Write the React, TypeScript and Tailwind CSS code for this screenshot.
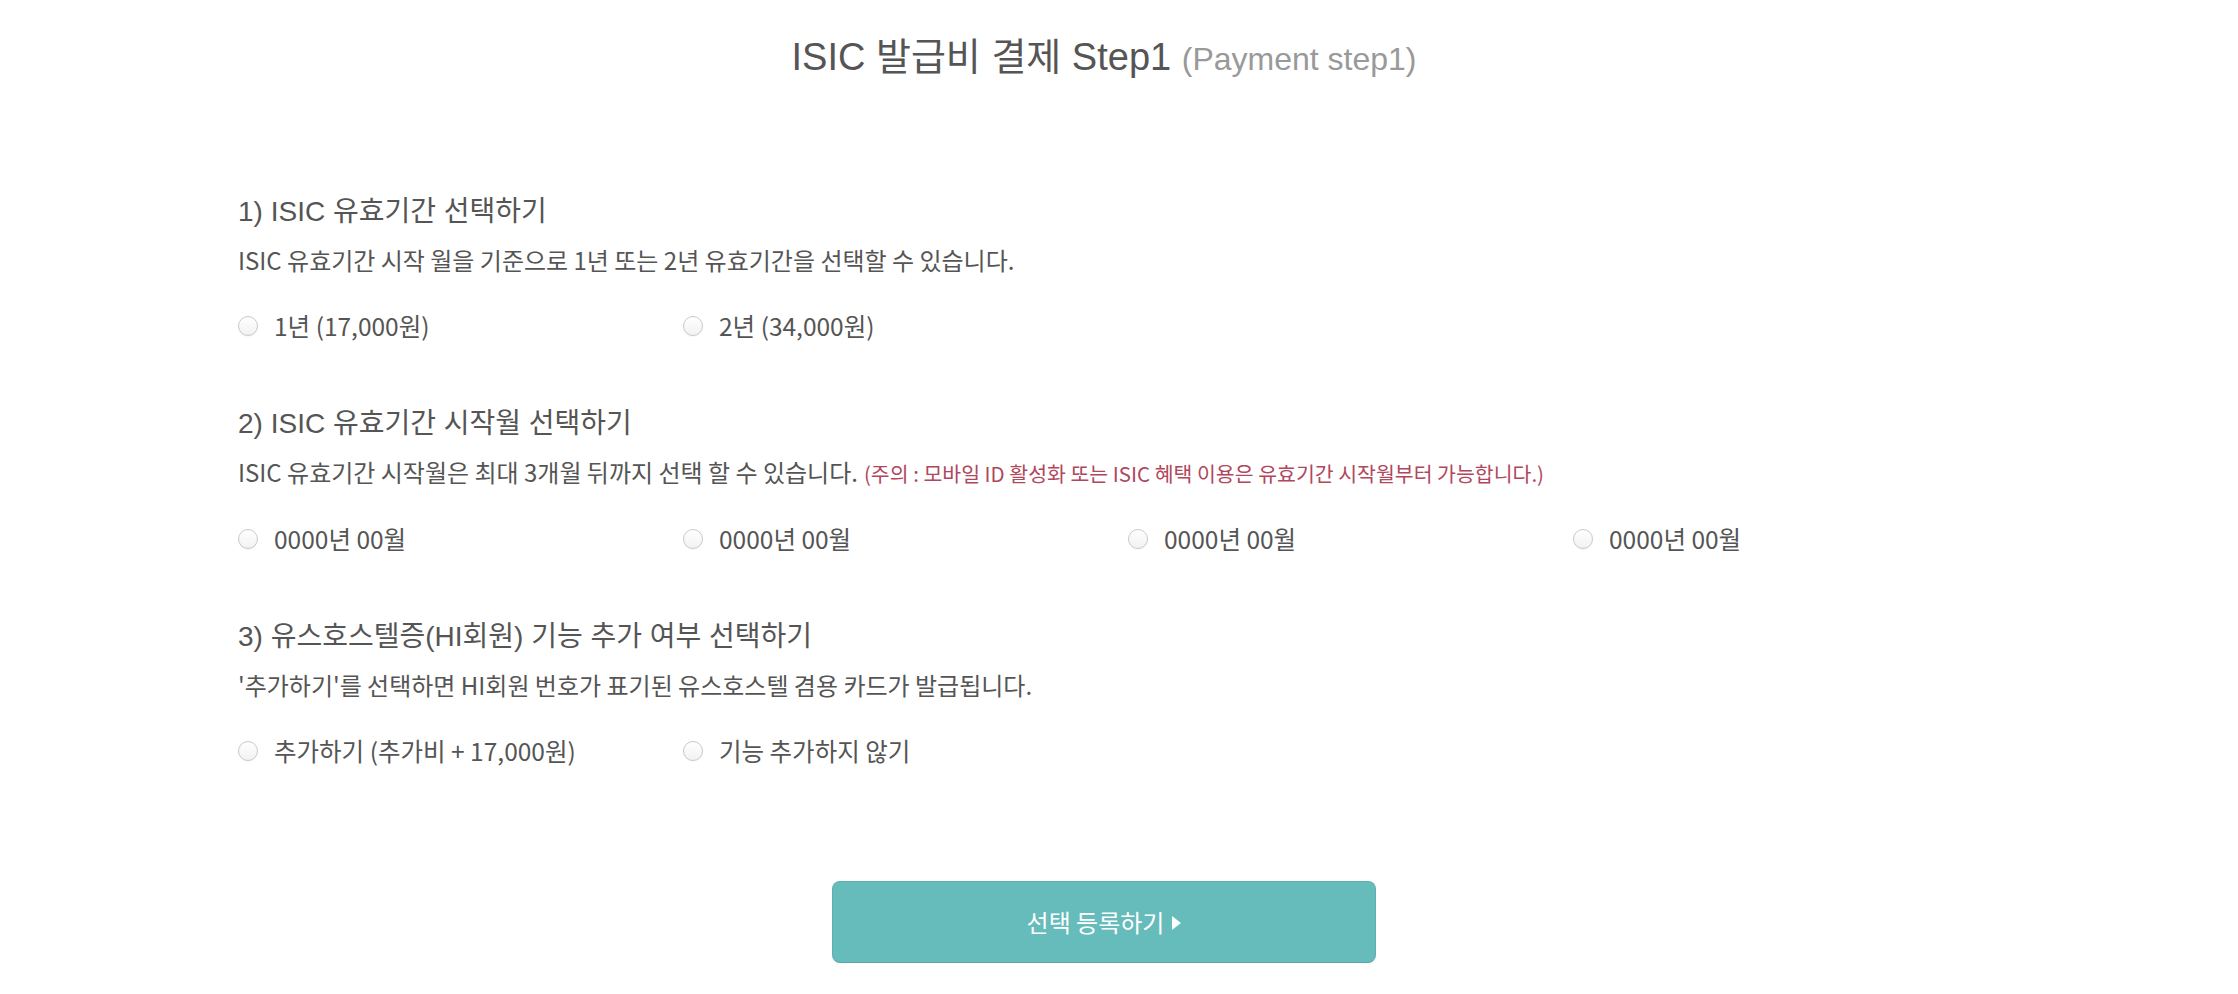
const sans = "font-['Liberation_Sans','Noto_Sans_CJK_KR',sans-serif]";
const kr = "font-['Noto_Sans_CJK_KR','Liberation_Sans',sans-serif]";

function Radio({ label }: { label: string }) {
  return (
    <label className="w-[445px] shrink-0 flex items-center gap-[16px] cursor-pointer">
      <span className="w-[20px] h-[20px] rounded-full border border-[#c9c9c9] bg-gradient-to-b from-white to-[#f2f2f2] shadow-[0_1px_1px_rgba(0,0,0,0.04)]" />
      <span className={`${kr} text-[24.5px] text-[#555]`}>{label}</span>
    </label>
  );
}

function Section({
  title,
  desc,
  note,
  options,
  first,
}: {
  title: string;
  desc: string;
  note?: string;
  options: string[];
  first?: boolean;
}) {
  return (
    <section className={first ? 'mt-[110px]' : 'mt-[62px]'}>
      <h2 className={`${sans} text-[28px] leading-[36px] text-[#555]`}>{title}</h2>
      <p className={`${kr} mt-[12px] text-[24px] leading-[36px] text-[#555]`}>
        {desc}
        {note && <span className="ml-[6px] text-[20.5px] text-[#b0475d]">{note}</span>}
      </p>
      <div className="mt-[30px] h-[36px] flex items-center">
        {options.map((o, i) => (
          <Radio key={i} label={o} />
        ))}
      </div>
    </section>
  );
}

export default function App() {
  return (
    <div className="min-h-screen bg-white pr-[30px]">
      <div className="mx-auto w-[1732px]">
        {/* 타이틀 */}
        <h1 className={`${sans} pt-[32px] text-center text-[38px] leading-[50px] text-[#555]`}>
          ISIC 발급비 결제 Step1{' '}
          <span className="text-[32px] text-[#999]">(Payment step1)</span>
        </h1>

        <Section
          first
          title="1) ISIC 유효기간 선택하기"
          desc="ISIC 유효기간 시작 월을 기준으로 1년 또는 2년 유효기간을 선택할 수 있습니다."
          options={['1년 (17,000원)', '2년 (34,000원)']}
        />
        <Section
          title="2) ISIC 유효기간 시작월 선택하기"
          desc="ISIC 유효기간 시작월은 최대 3개월 뒤까지 선택 할 수 있습니다."
          note="(주의 : 모바일 ID 활성화 또는 ISIC 혜택 이용은 유효기간 시작월부터 가능합니다.)"
          options={['0000년 00월', '0000년 00월', '0000년 00월', '0000년 00월']}
        />
        <Section
          title="3) 유스호스텔증(HI회원) 기능 추가 여부 선택하기"
          desc="'추가하기'를 선택하면 HI회원 번호가 표기된 유스호스텔 겸용 카드가 발급됩니다."
          options={['추가하기 (추가비 + 17,000원)', '기능 추가하지 않기']}
        />

        {/* 등록 버튼 */}
        <div className="mt-[112px] flex justify-center">
          <button
            className={`${kr} w-[544px] h-[82px] rounded-[8px] bg-[#66bbbb] border border-[#5cb0b0] border-b-[#55a8a7] text-white text-[24px] flex items-center justify-center gap-[8px]`}
          >
            선택 등록하기
            <svg width="9" height="14" viewBox="0 0 9 14" className="mt-[2px]">
              <path d="M0 0 L9 7 L0 14 Z" fill="#fff" />
            </svg>
          </button>
        </div>
      </div>
    </div>
  );
}
